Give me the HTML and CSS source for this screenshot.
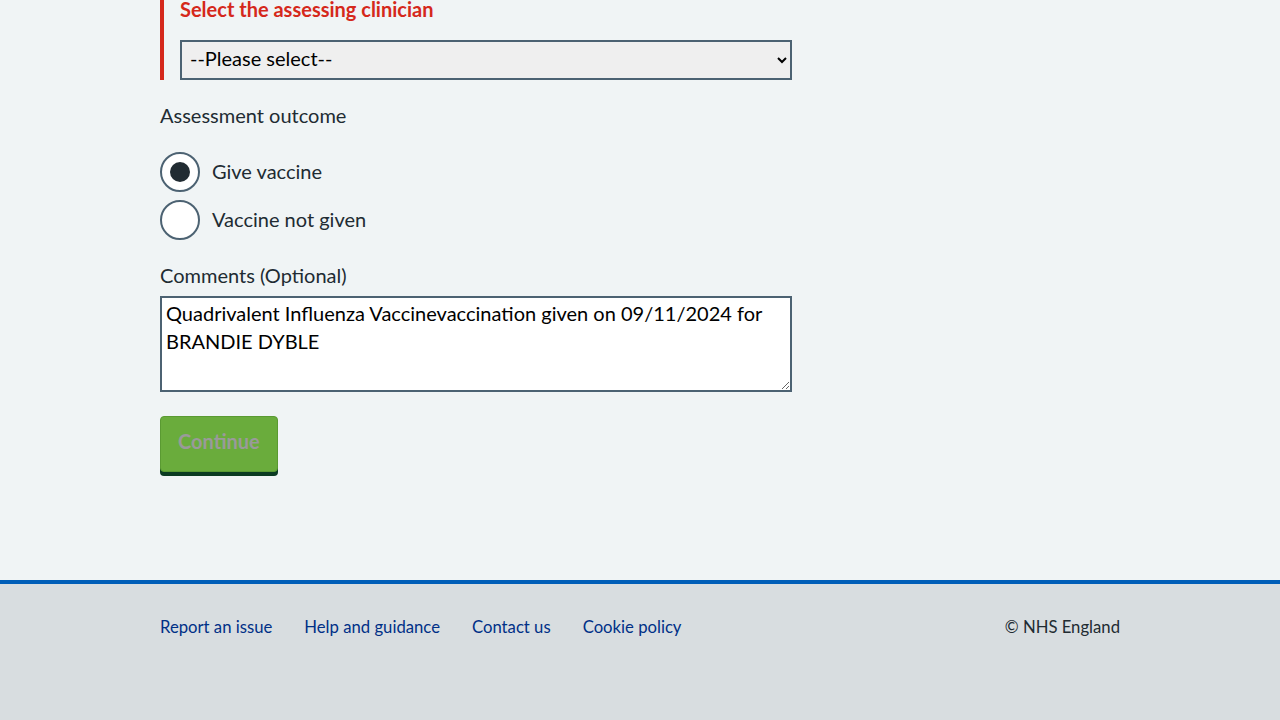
FILE: index.html
```html
<!DOCTYPE html>
<html lang="en">
<head>
<meta charset="utf-8">
<title>Assessment</title>
<link rel="stylesheet" href="styles.css">
</head>
<body>
<main class="main">
  <div class="container">
    <div class="form-group error">
      <label class="error-label" for="clinician">Select the assessing clinician</label>
      <select id="clinician" class="select">
        <option>--Please select--</option>
      </select>
    </div>

    <fieldset class="fieldset">
      <legend class="label">Assessment outcome</legend>
      <div class="radios">
        <label class="radio">
          <span class="radio-circle checked"></span>
          <span class="radio-text">Give vaccine</span>
        </label>
        <label class="radio">
          <span class="radio-circle"></span>
          <span class="radio-text">Vaccine not given</span>
        </label>
      </div>
    </fieldset>

    <div class="comments">
      <label class="label" for="comments">Comments (Optional)</label>
      <textarea id="comments" class="textarea">Quadrivalent Influenza Vaccinevaccination given on 09/11/2024 for BRANDIE DYBLE</textarea>
    </div>

    <button class="button" type="button">Continue</button>
  </div>
</main>
<footer class="footer">
  <div class="footer-inner">
    <ul class="footer-links">
      <li><a href="#">Report an issue</a></li>
      <li><a href="#">Help and guidance</a></li>
      <li><a href="#">Contact us</a></li>
      <li><a href="#">Cookie policy</a></li>
    </ul>
    <p class="copyright">© NHS England</p>
  </div>
</footer>
</body>
</html>
```

FILE: styles.css
```css
* { box-sizing: border-box; }
html, body { margin: 0; padding: 0; }
body {
  font-family: "Lato", "Open Sans", sans-serif;
  color: #212b32;
  background: #f0f4f5;
  height: 720px;
  display: flex;
  flex-direction: column;
}
.main { flex: 1 0 auto; height: 580px; }
.container { width: 960px; margin: 0 auto; }

.form-group.error {
  border-left: 4px solid #d5281b;
  padding-left: 16px;
  height: 80px;
}
.error-label {
  display: block;
  color: #d5281b;
  font-weight: 700;
  font-size: 20px;
  line-height: 18px;
  margin-bottom: 22px;
}
.select {
  display: block;
  width: 612px;
  height: 40px;
  border: 2px solid #4c6272;
  background: #efefef;
  font-family: inherit;
  font-size: 20px;
  color: #000;
  padding: 0 4px 5px;
  border-radius: 0;
}

.fieldset { border: 0; margin: 0; padding: 0; margin-top: 23px; }
.label {
  display: block;
  font-size: 20px;
  line-height: 24px;
  padding: 0;
  color: #212b32;
}
.fieldset .label { margin-bottom: 25px; }
.radios { display: flex; flex-direction: column; gap: 8px; }
.radio { display: flex; align-items: center; gap: 12px; height: 40px; }
.radio-circle {
  width: 40px; height: 40px;
  border: 2px solid #4c6272;
  border-radius: 50%;
  background: #fff;
  display: flex; align-items: center; justify-content: center;
}
.radio-circle.checked::after {
  content: "";
  width: 20px; height: 20px;
  border-radius: 50%;
  background: #212b32;
}
.radio-text { font-size: 20px; line-height: 24px; padding-bottom: 2px; }

.comments { margin-top: 23px; }
.comments .label { margin-bottom: 9px; }
.textarea {
  display: block;
  width: 632px;
  height: 96px;
  border: 2px solid #4c6272;
  background: #fff;
  font-family: inherit;
  font-size: 20px;
  line-height: 28px;
  color: #000;
  padding: 1px 4px 3px;
  resize: vertical;
  border-radius: 0;
}

.button {
  margin-top: 24px;
  height: 56px;
  padding: 0 17px 7px;
  background: #6aac3c;
  border: 1px solid #5a9a32;
  border-radius: 4px;
  box-shadow: 0 4px 0 #0b3b22;
  color: #9a9a9a;
  font-family: inherit;
  font-weight: 700;
  font-size: 20px;
}

.footer {
  border-top: 4px solid #005eb8;
  background: #d8dde0;
  height: 140px;
}
.footer-inner {
  width: 960px;
  margin: 0 auto;
  display: flex;
  justify-content: space-between;
  align-items: center;
  padding-top: 33px;
}
.footer-links {
  list-style: none; margin: 0; padding: 0;
  display: flex; gap: 32px;
}
.footer-links a {
  color: #003087;
  text-decoration: none;
  font-size: 16.7px;
  line-height: 20px;
}
.copyright { margin: 0; font-size: 16.7px; line-height: 20px; color: #212b32; }
```
